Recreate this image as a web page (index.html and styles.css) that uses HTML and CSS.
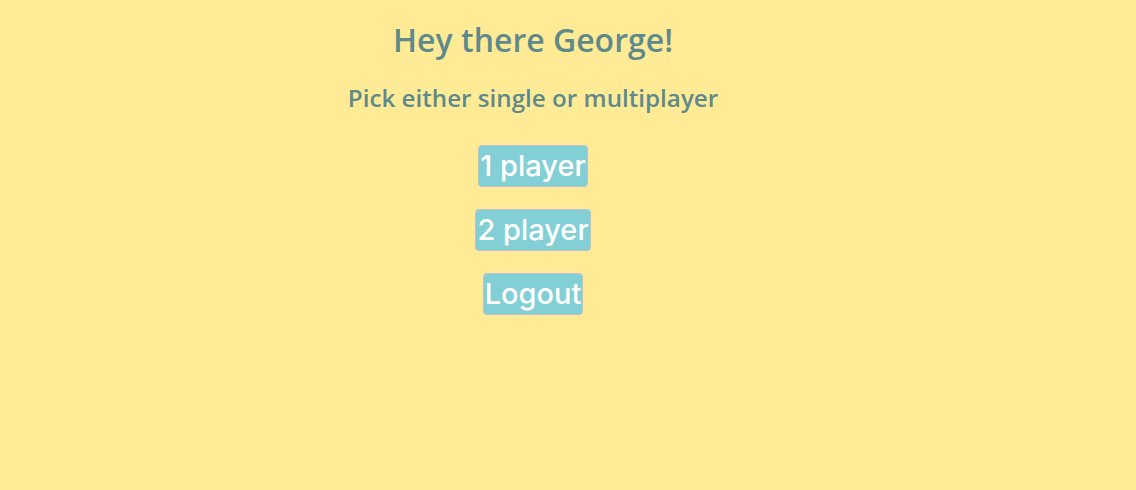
FILE: index.html
```html
<!DOCTYPE html>
<html>
<head>
<meta charset="utf-8">
<link rel="stylesheet" href="styles.css">
</head>
<body>
<div class="page">
  <h1 class="title">Hey there George!</h1>
  <h2 class="subtitle">Pick either single or multiplayer</h2>
  <div class="buttons">
    <button class="btn">1 player</button>
    <button class="btn">2 player</button>
    <button class="btn">Logout</button>
  </div>
</div>
</body>
</html>
```
FILE: styles.css
```css
html, body {
  margin: 0;
  padding: 0;
  background: #ffeb96;
  height: 100%;
}
.page {
  width: 1066px;
  display: flex;
  flex-direction: column;
  align-items: center;
  padding-top: 18px;
}
.title {
  font-family: "Open Sans", sans-serif;
  font-weight: 600;
  font-size: 32px;
  color: #5f8a8b;
  margin: 0;
  line-height: 44px;
}
.subtitle {
  font-family: "Open Sans", sans-serif;
  font-weight: 600;
  font-size: 24.2px;
  color: #5f8a8b;
  margin: 20px 0 0 0;
  line-height: 32px;
}
.buttons {
  display: flex;
  flex-direction: column;
  align-items: center;
  gap: 22px;
  margin-top: 31px;
}
.btn {
  font-family: Inter, "Liberation Sans", sans-serif;
  font-weight: 500;
  font-size: 29px;
  color: #ffffff;
  background: #83cfd6;
  border: 1px solid #bcc0cf;
  border-radius: 4px;
  padding: 2px 1px;
  line-height: 36px;
  height: 42px;
  box-sizing: border-box;
}
```
